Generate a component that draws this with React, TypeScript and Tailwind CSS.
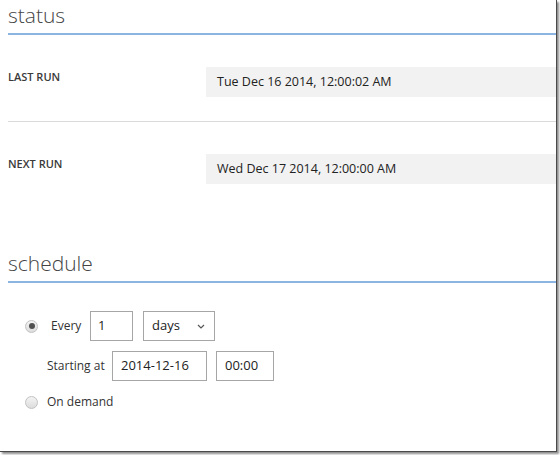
import React from "react";

const font = { fontFamily: '"Open Sans", "Noto Sans", sans-serif' };

function Radio({ checked }: { checked?: boolean }) {
  return (
    <span className="flex h-[13px] w-[13px] shrink-0 items-center justify-center rounded-full border border-[#c2c2c2] bg-gradient-to-b from-[#f4f4f4] to-[#dcdcdc]">
      {checked && <span className="h-[6px] w-[6px] rounded-full bg-[#505050]" />}
    </span>
  );
}

function StatusRow({ label, value }: { label: string; value: string }) {
  return (
    <div className="flex items-start">
      <div className="w-[198px] pt-[2px] text-[11px] leading-[16px] font-semibold text-[#3a3a3a]">{label}</div>
      <div className="flex h-[30px] flex-1 items-center bg-[#f2f2f2] pl-[11px] text-[12.5px] text-[#222]">{value}</div>
    </div>
  );
}

export default function App() {
  return (
    <div className="h-[455px] w-[560px] bg-white" style={font}>
      <div className="h-[452px] w-[557px] border-r border-b border-[#4a4a4a] pl-[8px] shadow-[2px_2px_2px_rgba(0,0,0,0.45)]">
        {/* status */}
        <h2 className="h-[35px] border-b-2 border-[#8cb5e1] text-[21px] leading-[30px] font-light text-[#444]">status</h2>
        <div className="mt-[32px]">
          <StatusRow label="LAST RUN" value="Tue Dec 16 2014, 12:00:02 AM" />
        </div>
        <div className="mt-[24px] border-t border-[#dadada]" />
        <div className="mt-[32px]">
          <StatusRow label="NEXT RUN" value="Wed Dec 17 2014, 12:00:00 AM" />
        </div>

        {/* schedule */}
        <h2 className="mt-[64px] h-[35px] border-b-2 border-[#8cb5e1] text-[21px] leading-[30px] font-light text-[#444]">schedule</h2>
        <div className="mt-[28px] flex flex-col pl-[17px] text-[12px] text-[#333]">
          <div className="flex items-center">
            <Radio checked />
            <span className="ml-[13px] w-[39px]">Every</span>
            <div className="flex h-[30px] w-[43px] items-center border border-[#a6a6a6] pl-[7px] text-[13px] text-[#222]">1</div>
            <div className="ml-[10px] flex h-[30px] w-[72px] items-center justify-between border border-[#a6a6a6] pr-[9px] pl-[8px] text-[13px] text-[#222]">
              <span>days</span>
              <svg width="8" height="5" viewBox="0 0 8 5">
                <polyline points="1,1 4,4 7,1" fill="none" stroke="#555" strokeWidth="1.2" />
              </svg>
            </div>
          </div>
          <div className="mt-[10px] flex items-center pl-[22px]">
            <span className="w-[65px]">Starting at</span>
            <div className="flex h-[30px] w-[95px] items-center border border-[#a6a6a6] pl-[8px] text-[13px] text-[#222]">2014-12-16</div>
            <div className="ml-[9px] flex h-[30px] w-[58px] items-center border border-[#a6a6a6] pl-[8px] text-[13px] text-[#222]">00:00</div>
          </div>
          <div className="mt-[12px] flex items-center">
            <Radio />
            <span className="ml-[9px]">On demand</span>
          </div>
        </div>
      </div>
    </div>
  );
}
